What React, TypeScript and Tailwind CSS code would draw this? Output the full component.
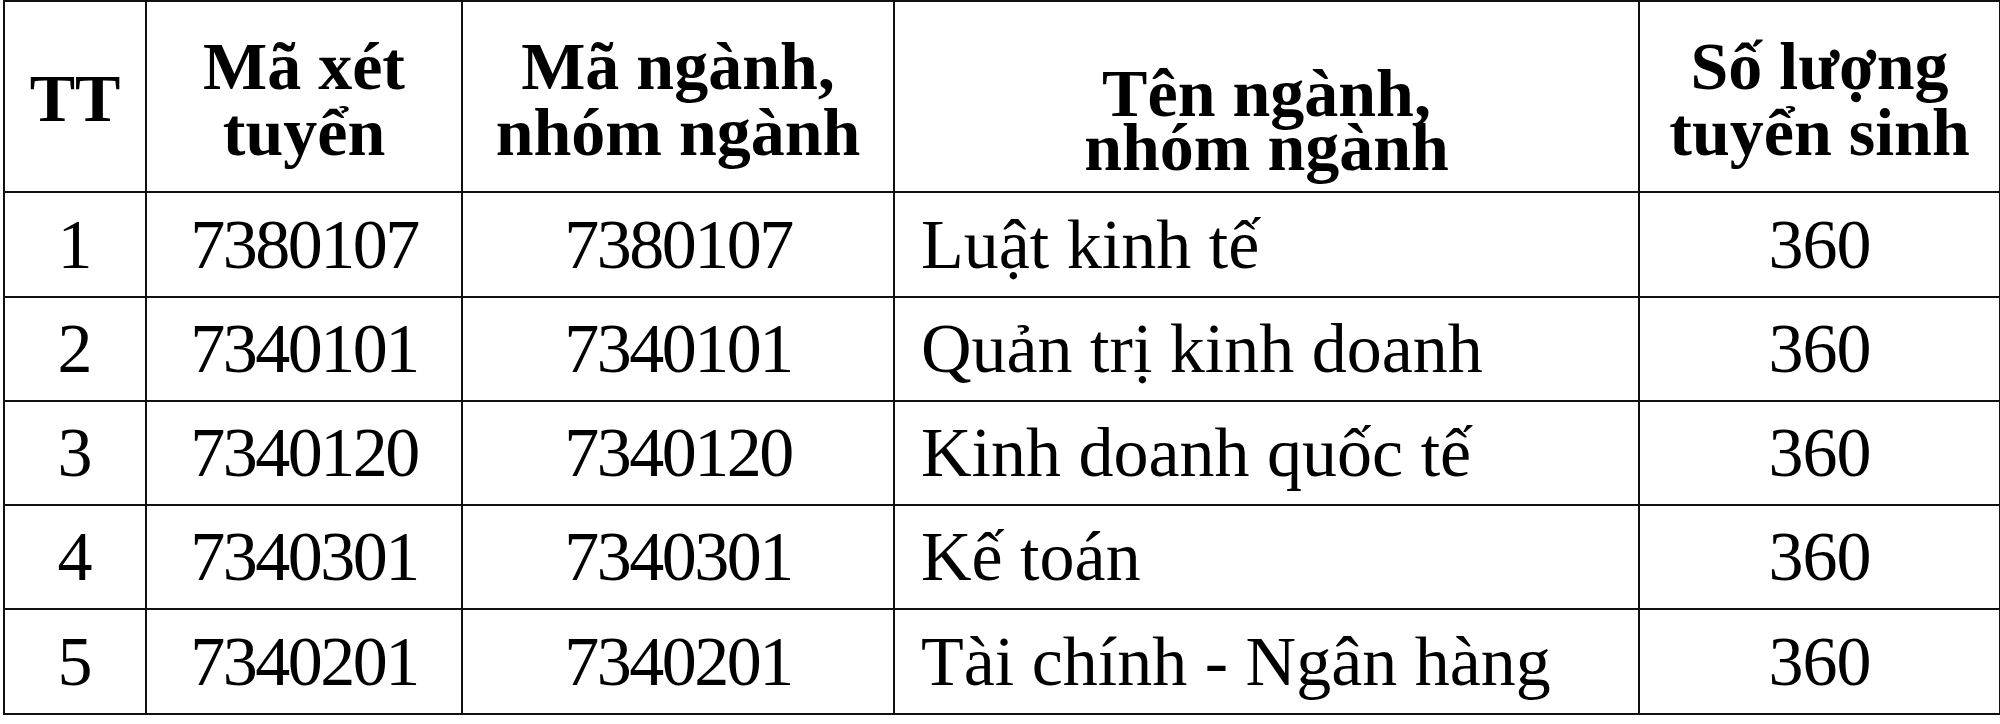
const rows = [
  { tt: '1', xet: '7380107', nganh: '7380107', ten: 'Luật kinh tế', sl: '360' },
  { tt: '2', xet: '7340101', nganh: '7340101', ten: 'Quản trị kinh doanh', sl: '360' },
  { tt: '3', xet: '7340120', nganh: '7340120', ten: 'Kinh doanh quốc tế', sl: '360' },
  { tt: '4', xet: '7340301', nganh: '7340301', ten: 'Kế toán', sl: '360' },
  { tt: '5', xet: '7340201', nganh: '7340201', ten: 'Tài chính - Ngân hàng', sl: '360' },
];

const rowHeights = ['h-[105px]', 'h-[104px]', 'h-[104px]', 'h-[104px]', 'h-[105px]'];

export default function App() {
  return (
    <div className="w-[2000px] h-[724px] bg-white text-black font-['Liberation_Serif','Times_New_Roman',serif]">
      <table className="ml-[3px] border-collapse table-fixed w-[1996px]">
        <colgroup>
          <col className="w-[142px]" />
          <col className="w-[316px]" />
          <col className="w-[432px]" />
          <col className="w-[745px]" />
          <col className="w-[361px]" />
        </colgroup>
        <thead>
          <tr className="h-[191px] font-bold text-[68px]">
            <th className="border-2 border-[#111] text-center align-middle leading-[66px] pt-[2px]">TT</th>
            <th className="border-2 border-[#111] text-center align-middle leading-[66px] pt-[4px]">
              Mã xét<br />tuyển
            </th>
            <th className="border-2 border-[#111] text-center align-middle leading-[66px] pt-[4px]">
              Mã ngành,<br />nhóm ngành
            </th>
            <th className="border-2 border-[#111] text-center align-middle leading-[54px] pt-[46px]">
              Tên ngành,<br />nhóm ngành
            </th>
            <th className="border-2 border-[#111] text-center align-middle leading-[66px] pt-[4px]">
              Số lượng<br />tuyển sinh
            </th>
          </tr>
        </thead>
        <tbody className="text-[70px] leading-none">
          {rows.map((r, i) => (
            <tr key={r.tt} className={rowHeights[i]}>
              <td className="border-2 border-[#111] text-center align-middle">{r.tt}</td>
              <td className="border-2 border-[#111] text-center align-middle tracking-[-2.5px]">{r.xet}</td>
              <td className="border-2 border-[#111] text-center align-middle tracking-[-2.5px]">{r.nganh}</td>
              <td className="border-2 border-[#111] text-left align-middle pl-[26px]">{r.ten}</td>
              <td className="border-2 border-[#111] text-center align-middle tracking-[-1px]">{r.sl}</td>
            </tr>
          ))}
        </tbody>
      </table>
    </div>
  );
}
